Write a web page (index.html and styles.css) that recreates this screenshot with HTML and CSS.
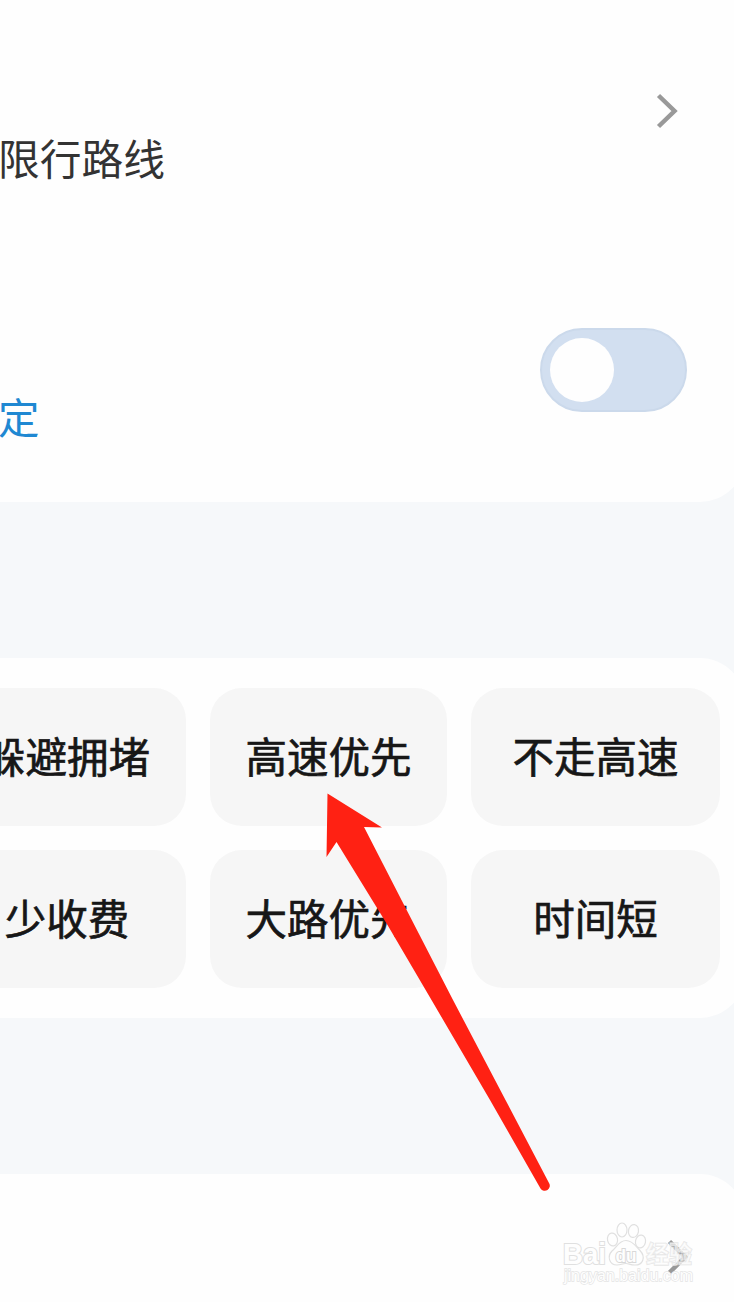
FILE: index.html
```html
<!DOCTYPE html>
<html lang="zh-CN">
<head>
    <meta charset="UTF-8">
    <meta name="viewport" content="width=device-width, initial-scale=1.0">
    <title>路线偏好</title>
    <link rel="stylesheet" href="styles.css">
</head>
<body>

    <div class="page">
        <div class="card limitCard">
            <div class="limitRow">
                <span class="limitText">限行路线</span>
                <svg class="chevron" width="24" height="38" viewBox="0 0 24 38">
                    <path d="M2.500 3.500 L18.500 19 L2.500 34.500"/>
                </svg>
            </div>
            <div class="switchRow">
                <a class="setLink">定</a>
                <div class="switch"><div class="knob"></div></div>
            </div>
        </div>

        <div class="card routeCard">
            <div class="option">躲避拥堵</div>
            <div class="option">高速优先</div>
            <div class="option">不走高速</div>
            <div class="option">少收费</div>
            <div class="option">大路优先</div>
            <div class="option">时间短</div>
        </div>

        <div class="card lastCard">
            <svg class="chevron" width="24" height="38" viewBox="0 0 24 38">
                <path d="M3.500 3.500 L19 19 L3.500 34.500"/>
            </svg>
        </div>

        <!-- Seta vermelha -->
        <svg class="arrow" width="734" height="1302" viewBox="0 0 734 1302">
            <path d="M327.500 793.500 L382 827.500 L364 827 L401.500 900 L453 1000 L505.500 1100 L549 1183 A5 5 0 0 1 540.500 1188.500 L490 1100 L431.500 1000 L387.500 925 L336.500 842 L326.500 857 Z"/>
        </svg>

        <!-- Marca d'água -->
        <svg class="watermark" width="150" height="76" viewBox="555 1215 150 76">
            <g class="paw">
                <ellipse cx="612.500" cy="1239.500" rx="5" ry="6.500" transform="rotate(-12 612.500 1239.500)"/>
                <ellipse cx="622" cy="1230" rx="5" ry="7"/>
                <ellipse cx="633.500" cy="1231" rx="5" ry="6.500" transform="rotate(10 633.500 1231)"/>
                <ellipse cx="640.500" cy="1241.500" rx="5" ry="6.500" transform="rotate(12 640.500 1241.500)"/>
                <path d="M626 1240.500 C633 1240.500 636 1247 640 1250.500 C646 1257 643 1265 635 1265 C630 1265 629 1263.500 626 1263.500 C622 1263.500 621 1265 617 1265 C609 1265 607 1256 612 1251 C617 1247 619 1240.500 626 1240.500 Z"/>
            </g>
            <text class="brand" x="563" y="1264" textLength="43" lengthAdjust="spacingAndGlyphs">Bai</text>
            <text class="du" x="615.500" y="1261.500" textLength="21" lengthAdjust="spacingAndGlyphs">du</text>
            <text class="brand brandCn" x="646" y="1263" textLength="46" lengthAdjust="spacingAndGlyphs">经验</text>
            <text class="site" x="564" y="1281" textLength="129" lengthAdjust="spacingAndGlyphs">jingyan.baidu.com</text>
        </svg>
    </div>

</body>
</html>
```

FILE: styles.css
```css
* {
    box-sizing: border-box;
}

body {
    margin: 0;
    font-family: "Noto Sans CJK SC", sans-serif;
    background-color: #f6f8fa;
}

.page {
    position: relative;
    width: 734px;
    height: 1302px;
    overflow: hidden;
}

.card {
    width: 745px;
    background-color: #fefefe;
}

/* Primeiro cartão */
.limitCard {
    height: 502px;
    border-radius: 0 0 45px 0;
    padding-top: 92px;
}

.limitRow {
    display: flex;
    justify-content: space-between;
    height: 228px;
    padding-right: 65px;
}

.limitText {
    margin: 35px 0 0 -2px;
    font-size: 41.75px;
    line-height: 60px;
    color: #333333;
}

.chevron {
    fill: none;
    stroke: #999999;
    stroke-width: 4.5;
}

.switchRow {
    display: flex;
    justify-content: space-between;
    padding: 8px 58px 0 0;
}

.setLink {
    margin: 58px 0 0 -2px;
    font-size: 41.5px;
    line-height: 60px;
    color: #1f88d2;
}

.switch {
    width: 147px;
    height: 84px;
    padding: 8px;
    border: 2px solid #cbd9eb;
    border-radius: 42px;
    background-color: #d2dff0;
}

.knob {
    width: 64px;
    height: 64px;
    border-radius: 50%;
    background-color: #fefefe;
}

/* Opções de rota */
.routeCard {
    display: grid;
    grid-template-columns: 238px 237px 249px;
    grid-template-rows: 138px 138px;
    gap: 24px;
    height: 360px;
    margin-top: 156px;
    padding-top: 30px;
    border-radius: 0 45px 45px 0;
}

.option {
    display: flex;
    justify-content: center;
    align-items: center;
    position: relative;
    left: -52px;
    padding-bottom: 4px;
    border-radius: 32px;
    background-color: #f6f6f6;
    color: #171717;
    font-size: 41.5px;
    -webkit-text-stroke: 0.7px #171717;
    white-space: nowrap;
}

.lastCard {
    display: flex;
    justify-content: flex-end;
    height: 128px;
    margin-top: 156px;
    padding: 64px 55px 0 0;
    border-radius: 0 45px 0 0;
}

.arrow {
    position: absolute;
    top: 0;
    left: 0;
    fill: #ff2113;
}

.watermark {
    position: absolute;
    left: 555px;
    top: 1215px;
    font-family: "Liberation Sans", "Noto Sans CJK SC", sans-serif;
}

.paw,
.brand {
    fill: #fefefe;
    stroke: #e0e0e0;
    stroke-width: 1.2;
}

.brand {
    font-size: 29px;
    font-weight: bold;
    stroke-width: 2;
    paint-order: stroke;
}

.brandCn {
    font-size: 24px;
    fill-opacity: 0.6;
    stroke-width: 1.4;
    stroke-opacity: 0.8;
}

.du {
    font-size: 19px;
    font-weight: bold;
    fill: #fefefe;
    stroke: #d8d8d8;
    stroke-width: 2;
    paint-order: stroke;
}

.site {
    font-size: 16px;
    fill: #fefefe;
    stroke: #e4e4e4;
    stroke-width: 1.4;
    paint-order: stroke;
}
```
